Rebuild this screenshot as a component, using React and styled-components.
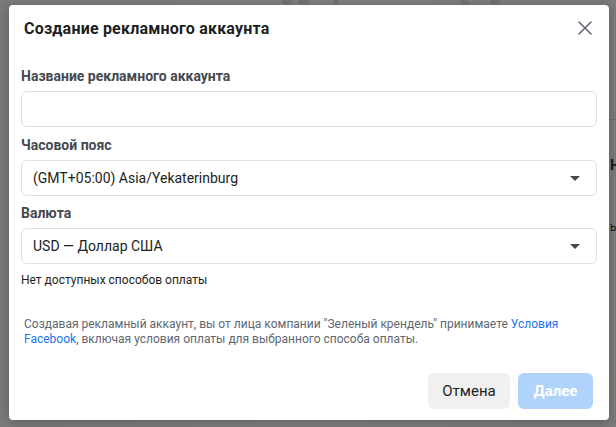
import React, { useState } from "react";
import styled, { createGlobalStyle } from "styled-components";

const GlobalStyle = createGlobalStyle`
  html, body {
    margin: 0;
    padding: 0;
    height: 100%;
    background: #7e7e7e;
  }
  body {
    font-family: Roboto, "Liberation Sans", Arial, sans-serif;
    -webkit-font-smoothing: antialiased;
  }
`;

const Backdrop = styled.div`
  position: relative;
  width: 616px;
  height: 427px;
  overflow: hidden;
  background: linear-gradient(90deg, #7a7a7a 0%, #808080 50%, #7b7b7b 100%);
`;

// faint page content showing through the overlay
const PageBit = styled.div`
  position: absolute;
  color: #1a1a1a;
  white-space: nowrap;
  font-family: Roboto, "Liberation Sans", Arial, sans-serif;
`;

const PageLine = styled.div`
  position: absolute;
  left: 609px;
  top: 119px;
  width: 10px;
  height: 1px;
  background: #6a6a6a;
`;

const Blob = styled.div`
  position: absolute;
  top: -6px;
  width: ${(p) => p.w}px;
  height: 11px;
  border-radius: ${(p) => (p.round ? "50%" : "2px")};
  background: #6e6e6e;
  opacity: 0.7;
`;

const Dialog = styled.div`
  position: absolute;
  left: 9px;
  top: 5px;
  width: 600px;
  height: 415px;
  background: #fff;
  border-radius: 4px;
  box-shadow: 0 2px 12px rgba(0, 0, 0, 0.25);
  display: flex;
  flex-direction: column;
  box-sizing: border-box;
`;

const Header = styled.div`
  display: flex;
  align-items: center;
  justify-content: space-between;
  padding: 6px 16px 0 15px;
  height: 34px;
`;

const Title = styled.h1`
  margin: 0;
  font-size: 16px;
  font-weight: 700;
  color: #1c1e21;
  letter-spacing: 0.2px;
`;

const Close = styled.button`
  border: 0;
  background: none;
  padding: 0;
  width: 16px;
  height: 16px;
  display: flex;
  align-items: center;
  justify-content: center;
  cursor: pointer;
`;

const Body = styled.div`
  padding: 22px 12px 0 12px;
  display: flex;
  flex-direction: column;
`;

const Field = styled.div`
  display: flex;
  flex-direction: column;
  margin-bottom: ${(p) => p.mb || 9}px;
`;

const Label = styled.label`
  font-size: 14px;
  font-weight: 700;
  color: #444950;
  line-height: 18px;
  margin-bottom: 6px;
`;

const Input = styled.input`
  height: 36px;
  box-sizing: border-box;
  border: 1px solid #dddfe2;
  border-radius: 6px;
  padding: 0 11px;
  font-size: 14px;
  font-family: inherit;
  outline: none;
`;

const Select = styled.div`
  height: 36px;
  box-sizing: border-box;
  border: 1px solid #dddfe2;
  border-radius: 6px;
  padding: 0 16px 0 11px;
  display: flex;
  align-items: center;
  justify-content: space-between;
  font-size: 14px;
  color: #1c1e21;
  cursor: pointer;
`;

const Caret = styled.span`
  width: 0;
  height: 0;
  border-left: 5px solid transparent;
  border-right: 5px solid transparent;
  border-top: 5px solid #444950;
`;

const Note = styled.div`
  font-size: 12px;
  color: #1c1e21;
  line-height: 16px;
`;

const Terms = styled.p`
  margin: 29px 3px 0 3px;
  font-size: 12px;
  line-height: 15px;
  color: #606770;
`;

const Link = styled.a`
  color: #1877f2;
  text-decoration: none;
  cursor: pointer;
`;

const Footer = styled.div`
  margin-top: auto;
  padding: 0 16px 11px 0;
  display: flex;
  justify-content: flex-end;
  gap: 8px;
`;

const Button = styled.button`
  height: 36px;
  width: ${(p) => p.w}px;
  border: 0;
  border-radius: 6px;
  padding: 0;
  font-family: inherit;
  font-size: 15px;
  font-weight: ${(p) => (p.primary ? 700 : 400)};
  color: ${(p) => (p.primary ? "#ffffff" : "#1c1e21")};
  background: ${(p) => (p.primary ? "#b0d3fc" : "#f0f0f0")};
  cursor: ${(p) => (p.primary ? "default" : "pointer")};
`;

export default function App() {
  const [name, setName] = useState("");

  return (
    <>
      <GlobalStyle />
      <Backdrop>
        <Blob w={12} round style={{ left: 281 }} />
        <Blob w={11} style={{ left: 298 }} />
        <Blob w={4} style={{ left: 334, height: 14 }} />
        <Blob w={8} round style={{ left: 461, top: -2 }} />
        <Blob w={10} style={{ left: 490 }} />
        <PageLine />
        <PageBit style={{ left: 610, top: 156, fontSize: 15, fontWeight: 700 }}>Н</PageBit>
        <PageBit style={{ left: 610, top: 220, fontSize: 12 }}>ь</PageBit>

        <Dialog>
          <Header>
            <Title>Создание рекламного аккаунта</Title>
            <Close aria-label="Закрыть">
              <svg width="14" height="14" viewBox="0 0 14 14">
                <path d="M1 1 L13 13 M13 1 L1 13" stroke="#606770" strokeWidth="1.6" strokeLinecap="round" />
              </svg>
            </Close>
          </Header>

          <Body>
            <Field>
              <Label>Название рекламного аккаунта</Label>
              <Input value={name} onChange={(e) => setName(e.target.value)} />
            </Field>
            <Field mb={8}>
              <Label>Часовой пояс</Label>
              <Select>
                <span>(GMT+05:00) Asia/Yekaterinburg</span>
                <Caret />
              </Select>
            </Field>
            <Field mb={8}>
              <Label>Валюта</Label>
              <Select>
                <span>USD — Доллар США</span>
                <Caret />
              </Select>
            </Field>
            <Note>Нет доступных способов оплаты</Note>
            <Terms>
              Создавая рекламный аккаунт, вы от лица компании "Зеленый крендель" принимаете{" "}
              <Link>Условия Facebook</Link>, включая условия оплаты для выбранного способа оплаты.
            </Terms>
          </Body>

          <Footer>
            <Button w={82}>Отмена</Button>
            <Button primary disabled w={75}>Далее</Button>
          </Footer>
        </Dialog>
      </Backdrop>
    </>
  );
}
